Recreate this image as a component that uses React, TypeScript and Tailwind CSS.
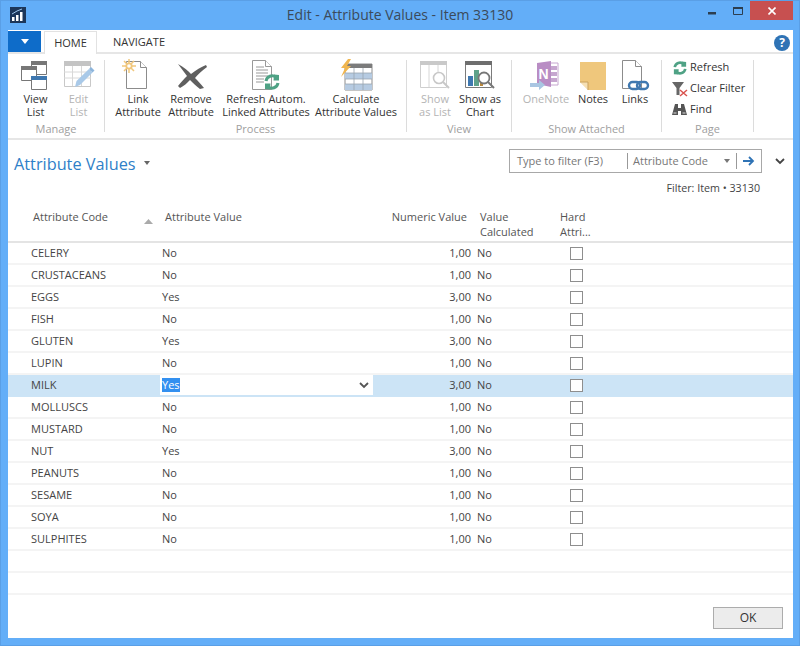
import React from 'react';
import { clsx } from 'clsx';

const FONT = "font-['Open_Sans','Noto_Sans',sans-serif]";

const rows: [string, string, string][] = [
  ['CELERY', 'No', '1,00'],
  ['CRUSTACEANS', 'No', '1,00'],
  ['EGGS', 'Yes', '3,00'],
  ['FISH', 'No', '1,00'],
  ['GLUTEN', 'Yes', '3,00'],
  ['LUPIN', 'No', '1,00'],
  ['MILK', 'Yes', '3,00'],
  ['MOLLUSCS', 'No', '1,00'],
  ['MUSTARD', 'No', '1,00'],
  ['NUT', 'Yes', '3,00'],
  ['PEANUTS', 'No', '1,00'],
  ['SESAME', 'No', '1,00'],
  ['SOYA', 'No', '1,00'],
  ['SULPHITES', 'No', '1,00'],
];

const Ico = ({ children, w = 32, h = 32 }: { children: React.ReactNode; w?: number; h?: number }) => (
  <svg width={w} height={h} viewBox={`0 0 ${w} ${h}`} fill="none">
    {children}
  </svg>
);

const RefreshIcon = ({ s = 16 }: { s?: number }) => (
  <svg width={s} height={s} viewBox="0 0 16 16" fill="none">
    <path d="M2 7a6 6 0 0 1 10-3.500" stroke="#4fa285" strokeWidth="3" />
    <path d="M10 0.500 15 1v5.500H9.500z" fill="#4fa285" />
    <path d="M14 9a6 6 0 0 1-10 3.500" stroke="#4fa285" strokeWidth="3" />
    <path d="M6 15.500 1 15V9.500h5.500z" fill="#4fa285" />
  </svg>
);

const icons: Record<string, React.ReactNode> = {
  viewList: (
    <Ico>
      <path d="M11.500 2.500h15v13h-15z" fill="#fff" stroke="#777" />
      <path d="M11 2h16v4H11z" fill="#777" />
      <path d="M1.500 7.500h15v14h-15z" fill="#fff" stroke="#777" />
      <path d="M1 7h16v4H1z" fill="#777" />
      <path d="M11.500 17.500h15v13h-15z" fill="#fff" stroke="#777" />
      <path d="M11 17h16v4H11z" fill="#3f78b0" />
    </Ico>
  ),
  editList: (
    <Ico>
      <path d="M1.500 2.500h26v25h-26z" fill="#fff" stroke="#c8c8c8" />
      <path d="M1 2h27v5H1z" fill="#c4c4c4" />
      <path d="M1 13h27M1 19h27M9.500 7v20M18.500 7v20" stroke="#d8d8d8" />
      <path d="M12 28l1.500-6L26 10l3.500 3.500L17 26z" fill="#a9c9e8" />
      <path d="M26 10l2-2 3.500 3.500-2 2z" fill="#8db5dc" />
    </Ico>
  ),
  link: (
    <Ico>
      <path d="M4.500 2.500h14l6 6v21h-20z" fill="#fff" stroke="#8c8c8c" />
      <path d="M18.500 2.500v6h6" fill="#fff" stroke="#8c8c8c" />
      <path d="M7 0v14M0 7h14M2 2l10 10M12 2 2 12" stroke="#f1c77c" strokeWidth="1.500" />
      <circle cx="7" cy="7" r="3.600" fill="#f1c77c" />
      <circle cx="7" cy="7" r="1.800" fill="#fff" />
    </Ico>
  ),
  remove: (
    <Ico>
      <path d="M3 5 C9 8 13 12 16 15 C21 11 26 8 31 6 L32 8 C27 12 23 15 20 19 C23 22 26 25 29 29 L25 30 C21 27 18 24 15 21 C12 24 9 27 5 29 L3 27 C6 23 9 20 12 17 C9 13 6 9 3 5z" fill="#5f5f5f" />
    </Ico>
  ),
  refreshAutom: (
    <Ico>
      <path d="M2.500 1.500h13l6 6v23h-19z" fill="#fff" stroke="#999" />
      <path d="M15.500 1.500v6h6" fill="#fff" stroke="#999" />
      <path d="M6 8h8M6 11h12M6 14h12M6 17h12M6 20h8M6 23h8" stroke="#999" />
      <g transform="translate(14 15)">
        <RefreshIcon s={16} />
      </g>
    </Ico>
  ),
  calculate: (
    <Ico w={34} h={32}>
      <path d="M6 5h27v26H6z" fill="#fff" stroke="#8c8c8c" />
      <path d="M6 5h27v4H6z" fill="#7b7b7b" />
      <path d="M6 14h27v6H6z" fill="#b6cbe2" />
      <path d="M6 25h27v6H6z" fill="#b6cbe2" />
      <path d="M6 14h27M6 20h27M6 25h27M15 9v22M24 9v22" stroke="#9aa5b0" strokeWidth="0.800" />
      <path d="M9 0 2 9h4l-4 9 10-11H8l4-7z" fill="#f0b64f" />
    </Ico>
  ),
  showList: (
    <Ico>
      <path d="M1.500 2.500h26v26h-26z" fill="#fff" stroke="#cfcfcf" />
      <path d="M1 2h27v4H1z" fill="#c9c9c9" />
      <path d="M10 6v22M19 6v8" stroke="#d6d6d6" />
      <circle cx="20" cy="19" r="5.500" fill="#fff" stroke="#c8c8c8" strokeWidth="1.600" />
      <path d="M24 23l6 6" stroke="#c8c8c8" strokeWidth="2" />
    </Ico>
  ),
  showChart: (
    <Ico>
      <path d="M1.500 2.500h26v26h-26z" fill="#fff" stroke="#7b7b7b" />
      <path d="M1 2h27v4H1z" fill="#6e6e6e" />
      <path d="M4 17h5v10H4z" fill="#3f78b0" />
      <path d="M10 11h5v16h-5z" fill="#5fa28a" />
      <path d="M16 15h3v12h-3z" fill="#b8873b" />
      <circle cx="20" cy="19" r="5.500" fill="#fff" stroke="#777" strokeWidth="1.800" />
      <path d="M24 23l6 6" stroke="#777" strokeWidth="2" />
    </Ico>
  ),
  oneNote: (
    <Ico>
      <path d="M17 4h11v22H17z" fill="#fff" stroke="#c6a6cf" />
      <path d="M21 7h6v4h-6zM21 13h6v4h-6zM21 19h6v4h-6z" fill="#c6a6cf" />
      <path d="M7 4l14-2v26l-14-3z" fill="#b98dc4" />
      <text x="8.500" y="20" fontSize="14" fontWeight="700" fill="#fff" fontFamily="'Liberation Sans',sans-serif">
        N
      </text>
      <path d="M0 24h9v-3l6 5-6 5v-3H0z" fill="#a9c6e2" />
    </Ico>
  ),
  notes: (
    <Ico w={28} h={30}>
      <path d="M1 2h26v28H9l-8-8z" fill="#efc77c" />
      <path d="M1 22h8v8z" fill="#fff" />
      <path d="M1 22h8v8" stroke="#c9a25f" fill="#f6e0b4" />
    </Ico>
  ),
  links: (
    <Ico w={30}>
      <path d="M2.500 1.500h13l6 6v22h-19z" fill="#fff" stroke="#8c8c8c" />
      <path d="M15.500 1.500v6h6" fill="#fff" stroke="#8c8c8c" />
      <rect x="9" y="23" width="11" height="7" rx="3.500" stroke="#3f78b0" strokeWidth="2.400" fill="none" />
      <rect x="17" y="23" width="11" height="7" rx="3.500" stroke="#3f78b0" strokeWidth="2.400" fill="none" />
    </Ico>
  ),
};

type Btn = { label: [string, string?]; icon: string; width: number; disabled?: boolean };

const RibbonButton = ({ label, icon, width, disabled }: Btn) => (
  <div style={{ width }} className="flex flex-col items-center shrink-0 -mt-[1px]">
    <div className="h-[32px] flex items-center justify-center">{icons[icon]}</div>
    <div
      className={clsx(
        'mt-[1px] text-center leading-[13px] text-[11px] whitespace-nowrap',
        disabled ? 'text-[#b4b4b4]' : 'text-[#333]',
      )}
    >
      <div>{label[0]}</div>
      {label[1] && <div>{label[1]}</div>}
    </div>
  </div>
);

const RibbonGroup = ({
  title,
  width,
  pad,
  children,
}: {
  title: string;
  width: number;
  pad: number;
  children: React.ReactNode;
}) => (
  <div style={{ width }} className="shrink-0 flex flex-col h-[72px] border-r border-[#dcdcdc]">
    <div style={{ paddingLeft: pad }} className="flex h-[62px] shrink-0">
      {children}
    </div>
    <div className="text-center text-[11px] leading-[14px] text-[#a0a0a0]">{title}</div>
  </div>
);

const SmallAction = ({ icon, label }: { icon: React.ReactNode; label: string }) => (
  <div className="flex items-center h-[21px] gap-[2px] text-[11px] text-[#333]">
    <div className="w-[17px] flex justify-center">{icon}</div>
    <span>{label}</span>
  </div>
);

const Check = () => <div className="w-[13px] h-[13px] bg-white border border-[#8e8e8e]" />;

const Row = ({ code, value, num, active }: { code?: string; value?: string; num?: string; active?: boolean }) => (
  <div
    className={clsx(
      'flex h-[22px] items-center text-[11px] text-[#444] border-b-2',
      active ? 'bg-[#cce4f6] border-[#cce4f6]' : 'border-[#f4f4f4]',
    )}
  >
    <div className="w-[152px] pl-[23px] shrink-0">{code}</div>
    <div className={clsx('w-[213px] pl-[2px] shrink-0 flex items-center h-full', active && 'bg-white pr-[4px]')}>
      {active ? (
        <>
          <span className="bg-[#3390f0] text-white leading-[14px]">{value}</span>
          <svg className="ml-auto" width="10" height="7" viewBox="0 0 10 7" fill="none">
            <path d="M1 1l4 4 4-4" stroke="#555" strokeWidth="1.800" />
          </svg>
        </>
      ) : (
        value
      )}
    </div>
    <div className="w-[98px] text-right shrink-0">{num}</div>
    <div className="w-[6px] shrink-0" />
    <div className="w-[93px] shrink-0">{code ? 'No' : ''}</div>
    {code && <Check />}
  </div>
);

const App = () => (
  <div className={clsx('w-[800px] h-[646px] bg-[#63aef8] border border-[#5a9fe6] flex flex-col overflow-hidden', FONT)}>
    {/* title bar */}
    <div className="h-[29px] shrink-0 grid grid-cols-[1fr_auto_1fr] items-start">
      <div className="pl-[9px] pt-[6px]">
        <svg width="16" height="16" viewBox="0 0 16 16">
          <path d="M0 0h16v16H0z" fill="#1c3659" />
          <path d="M2 10h2.500v4H2zM6 8h2.500v6H6zM10 5h2.500v9H10z" fill="#fff" />
          <path d="M2 7l5-3 5-2" stroke="#9ec6ec" fill="none" />
        </svg>
      </div>
      <div className="pt-[4px] text-[14px] leading-[20px] text-[#3b4a5a]">Edit - Attribute Values - Item 33130</div>
      <div className="flex justify-end items-start pr-[6px]">
        <svg className="mt-[11px] mr-[17px]" width="8" height="3" viewBox="0 0 8 3">
          <path d="M0 0h8v2.500H0z" fill="#2c3e50" />
        </svg>
        <svg className="mt-[6px] mr-[7px]" width="10" height="8" viewBox="0 0 10 8" fill="none">
          <path d="M.5.500h9v7h-9z" stroke="#2c3e50" />
          <path d="M0 0h10v2H0z" fill="#2c3e50" />
        </svg>
        <div className="w-[43px] h-[19px] bg-[#c75050] flex items-center justify-center">
          <svg width="8" height="8" viewBox="0 0 8 8" fill="none">
            <path d="M.5.500l7 7M7.500.500l-7 7" stroke="#fff" strokeWidth="1.600" />
          </svg>
        </div>
      </div>
    </div>

    {/* window body */}
    <div className="ml-[7px] mr-[6px] mb-[7px] flex-1 bg-white flex flex-col min-h-0">
      <div className="h-[24px] shrink-0 flex items-end border-b-2 border-[#e6e6e6]">
        <div className="w-[33px] h-[21px] bg-[#0e6cc9] flex items-center justify-center">
          <svg width="8" height="5" viewBox="0 0 8 5">
            <path d="M0 0h8L4 5z" fill="#fff" />
          </svg>
        </div>
        <div className="ml-[3px] w-[53px] h-[23px] -mb-[2px] bg-white border border-b-0 border-[#e2e2e2] flex items-center justify-center text-[11px] text-[#333]">
          HOME
        </div>
        <div className="ml-[16px] h-[23px] -mb-[2px] flex items-center text-[11px] text-[#333]">NAVIGATE</div>
        <div className="ml-auto mr-[3px] h-[23px] -mb-[2px] flex items-center">
          <div className="w-[16px] h-[16px] rounded-full bg-[#2f73b5] text-white text-[12px] font-bold leading-[16px] text-center">
            ?
          </div>
        </div>
      </div>

      {/* ribbon */}
      <div className="h-[86px] shrink-0 flex pt-[6px] border-b-2 border-[#e6e6e6]">
        <RibbonGroup title="Manage" width={97} pad={5}>
          <RibbonButton label={['View', 'List']} icon="viewList" width={45} />
          <RibbonButton label={['Edit', 'List']} icon="editList" width={41} disabled />
        </RibbonGroup>
        <RibbonGroup title="Process" width={302} pad={7}>
          <RibbonButton label={['Link', 'Attribute']} icon="link" width={52} />
          <RibbonButton label={['Remove', 'Attribute']} icon="remove" width={54} />
          <RibbonButton label={['Refresh Autom.', 'Linked Attributes']} icon="refreshAutom" width={96} />
          <RibbonButton label={['Calculate', 'Attribute Values']} icon="calculate" width={84} />
        </RibbonGroup>
        <RibbonGroup title="View" width={105} pad={6}>
          <RibbonButton label={['Show', 'as List']} icon="showList" width={44} disabled />
          <RibbonButton label={['Show as', 'Chart']} icon="showChart" width={46} />
        </RibbonGroup>
        <RibbonGroup title="Show Attached" width={150} pad={6}>
          <RibbonButton label={['OneNote']} icon="oneNote" width={56} disabled />
          <RibbonButton label={['Notes']} icon="notes" width={38} />
          <RibbonButton label={['Links']} icon="links" width={46} />
        </RibbonGroup>
        <RibbonGroup title="Page" width={92} pad={9}>
          <div className="flex flex-col -mt-[3px]">
            <SmallAction icon={<RefreshIcon s={14} />} label="Refresh" />
            <SmallAction
              icon={
                <svg width="16" height="16" viewBox="0 0 16 16" fill="none">
                  <path d="M0 1h12L7.500 7v7h-3V7z" fill="#666" />
                  <path d="M8 9l7 6M15 9l-7 6" stroke="#d9534f" strokeWidth="1.500" />
                </svg>
              }
              label="Clear Filter"
            />
            <SmallAction
              icon={
                <svg width="15" height="14" viewBox="0 0 15 14">
                  <path d="M3 1h3v4h3V1h3l3 11h-6V8H6v4H0z" fill="#555" />
                  <path d="M1.500 10h3M10.500 10h3" stroke="#ddd" />
                </svg>
              }
              label="Find"
            />
          </div>
        </RibbonGroup>
      </div>

      {/* page header */}
      <div className="h-[62px] shrink-0 flex">
        <div className="pl-[6px] pt-[12px] flex items-start">
          <span className="text-[#2f7fc8] text-[16.3px] leading-[24px]">Attribute Values</span>
          <svg className="ml-[8px] mt-[9px]" width="6" height="4" viewBox="0 0 6 4">
            <path d="M0 0h6L3 4z" fill="#666" />
          </svg>
        </div>
        <div className="ml-auto flex flex-col items-end pt-[9px] pr-[8px]">
          <div className="flex items-start">
            <div className="w-[253px] h-[24px] border border-[#a8a8a8] flex items-center text-[11px] text-[#777]">
              <span className="w-[117px] pl-[7px]">Type to filter (F3)</span>
              <div className="w-px h-[16px] bg-[#999]" />
              <span className="pl-[5px] w-[96px]">Attribute Code</span>
              <svg width="6" height="4" viewBox="0 0 6 4">
                <path d="M0 0h6L3 4z" fill="#777" />
              </svg>
              <div className="ml-[6px] w-px h-[16px] bg-[#999]" />
              <svg className="ml-[6px]" width="12" height="10" viewBox="0 0 12 10" fill="none">
                <path d="M0 5h10M6 1l4 4-4 4" stroke="#2f73b5" strokeWidth="1.800" />
              </svg>
            </div>
            <svg className="ml-[13px] mt-[9px]" width="10" height="7" viewBox="0 0 10 7" fill="none">
              <path d="M1 1l4 4 4-4" stroke="#444" strokeWidth="1.800" />
            </svg>
          </div>
          <div className="mt-[8px] mr-[25px] text-[10.700px] leading-[14px] text-[#444]">Filter: Item • 33130</div>
        </div>
      </div>

      {/* table header */}
      <div className="h-[41px] shrink-0 flex border-b-2 border-[#e4e4e4] text-[11px] leading-[15px] text-[#555] pt-[7px]">
        <div className="w-[152px] pl-[25px] shrink-0 flex">
          <span>Attribute Code</span>
          <svg className="ml-auto mr-[7px] mt-[10px]" width="9" height="5" viewBox="0 0 9 5">
            <path d="M0 5h9L4.500 0z" fill="#aaa" />
          </svg>
        </div>
        <div className="w-[213px] pl-[5px] shrink-0">Attribute Value</div>
        <div className="w-[94px] text-right shrink-0">Numeric Value</div>
        <div className="w-[13px] shrink-0" />
        <div className="w-[80px] shrink-0">
          Value
          <br />
          Calculated
        </div>
        <div className="shrink-0">
          Hard
          <br />
          Attri...
        </div>
      </div>

      {/* rows */}
      <div className="flex-1 min-h-0">
        {rows.map(([code, value, num]) => (
          <Row key={code} code={code} value={value} num={num} active={code === 'MILK'} />
        ))}
        <Row />
        <Row />
      </div>

      {/* footer */}
      <div className="flex justify-end pr-[10px] pb-[9px]">
        <div className="w-[70px] h-[22px] bg-[#ececec] border border-[#acacac] text-[12px] text-[#333] flex items-center justify-center">
          OK
        </div>
      </div>
    </div>
  </div>
);

export default App;
